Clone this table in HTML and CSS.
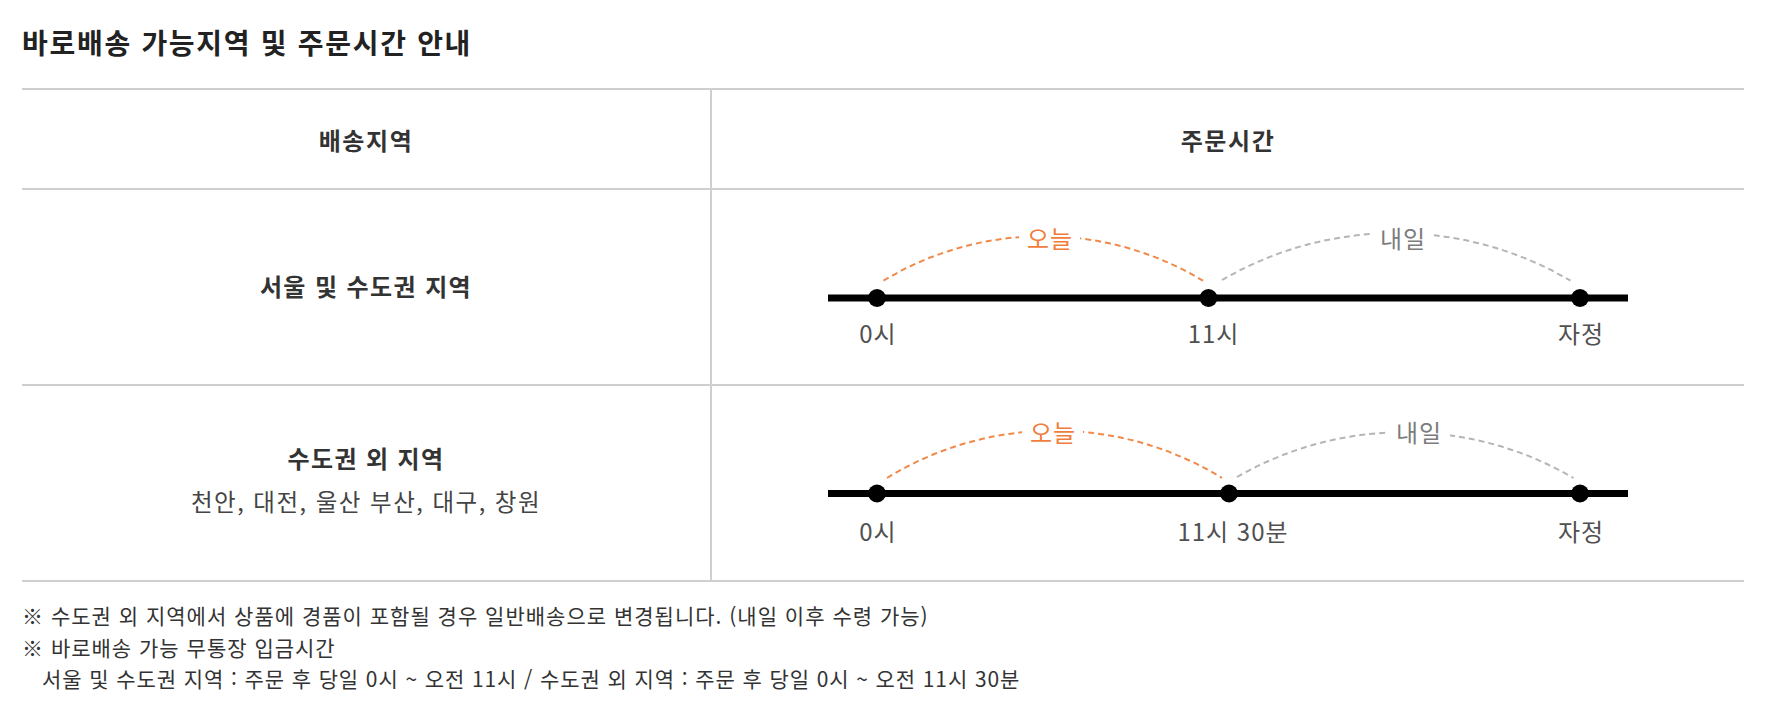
FILE: index.html
```html
<!DOCTYPE html>
<html lang="ko">
<head>
<meta charset="utf-8">
<title>바로배송 가능지역 및 주문시간 안내</title>
<link rel="stylesheet" href="styles.css">
</head>
<body>
<div class="wrap">
  <h2 class="title">바로배송 가능지역 및 주문시간 안내</h2>
  <div class="grid">
    <div class="cell head left">배송지역</div>
    <div class="cell head">주문시간</div>

    <div class="cell left row">
      <p class="area">서울 및 수도권 지역</p>
    </div>
    <div class="cell chart">
      <svg width="1032" height="194" viewBox="0 0 1032 194">
        <line x1="116" y1="108" x2="916" y2="108" stroke="#000" stroke-width="7"/>
        <path d="M171.5 90.7 A 309 309 0 0 1 491 90.7" fill="none" stroke="#f08a4b" stroke-width="2" stroke-dasharray="6 4"/>
        <path d="M510 90 A 345 345 0 0 1 858.5 90.7" fill="none" stroke="#b5b5b5" stroke-width="2" stroke-dasharray="6 4"/>
        <rect x="307" y="30" width="61" height="34" fill="#fff"/>
        <rect x="658" y="30" width="64" height="34" fill="#fff"/>
        <text x="338" y="51.5" class="lbl today">오늘</text>
        <text x="691" y="51.5" class="lbl tomorrow">내일</text>
        <circle cx="165" cy="108" r="9" fill="#000"/>
        <circle cx="496.5" cy="108" r="9" fill="#000"/>
        <circle cx="868" cy="108" r="9" fill="#000"/>
        <text x="166" y="146" class="lbl tick">0시</text>
        <text x="501.5" y="146" class="lbl tick">11시</text>
        <text x="869" y="146" class="lbl tick">자정</text>
      </svg>
    </div>

    <div class="cell left row row2">
      <p class="area">수도권 외 지역</p>
      <p class="cities">천안, 대전, 울산 부산, 대구, 창원</p>
    </div>
    <div class="cell chart">
      <svg width="1032" height="194" viewBox="0 0 1032 194">
        <line x1="116" y1="107.5" x2="916" y2="107.5" stroke="#000" stroke-width="7"/>
        <path d="M175 92 A 320 320 0 0 1 510 92" fill="none" stroke="#f08a4b" stroke-width="2" stroke-dasharray="6 4"/>
        <path d="M525 91 A 335 335 0 0 1 861.5 92" fill="none" stroke="#b5b5b5" stroke-width="2" stroke-dasharray="6 4"/>
        <rect x="310" y="30" width="61" height="34" fill="#fff"/>
        <rect x="674" y="30" width="64" height="34" fill="#fff"/>
        <text x="341" y="49.5" class="lbl today">오늘</text>
        <text x="707" y="49.5" class="lbl tomorrow">내일</text>
        <circle cx="165" cy="107.5" r="9" fill="#000"/>
        <circle cx="517" cy="107.5" r="9" fill="#000"/>
        <circle cx="868" cy="107.5" r="9" fill="#000"/>
        <text x="166" y="148.5" class="lbl tick">0시</text>
        <text x="521" y="148.5" class="lbl tick">11시 30분</text>
        <text x="869" y="148.5" class="lbl tick">자정</text>
      </svg>
    </div>
  </div>

  <div class="notes">
    <p>※ 수도권 외 지역에서 상품에 경품이 포함될 경우 일반배송으로 변경됩니다. (내일 이후 수령 가능)</p>
    <p>※ 바로배송 가능 무통장 입금시간</p>
    <p class="indent">서울 및 수도권 지역 : 주문 후 당일 0시 ~ 오전 11시 / 수도권 외 지역 : 주문 후 당일 0시 ~ 오전 11시 30분</p>
  </div>
</div>
</body>
</html>
```

FILE: styles.css
```css
* { box-sizing: border-box; }

body {
  margin: 0;
  background: #fff;
  font-family: "Noto Sans CJK KR", "Noto Sans", sans-serif;
  color: #333;
}

.wrap {
  padding: 24px 22px 0;
}

.title {
  margin: 0 0 28px;
  font-size: 28px;
  line-height: 36px;
  font-weight: 700;
  letter-spacing: 1.7px;
  color: #222;
}

.grid {
  display: grid;
  grid-template-columns: 690px 1fr;
  border-top: 2px solid #cfcfcf;
}

.cell {
  border-bottom: 2px solid #cfcfcf;
}

.left {
  border-right: 2px solid #cfcfcf;
}

.head {
  height: 100px;
  display: flex;
  align-items: center;
  justify-content: center;
  font-size: 24px;
  font-weight: 700;
  letter-spacing: 1.6px;
  color: #333;
}

.row {
  height: 196px;
  display: flex;
  flex-direction: column;
  align-items: center;
  justify-content: center;
}

.row2 {
  padding-bottom: 7px;
}

.area {
  margin: 0 0 2px;
  font-size: 24px;
  line-height: 30px;
  font-weight: 700;
  letter-spacing: 1.4px;
  color: #333;
}

.row2 .area {
  margin: 0;
}

.cities {
  margin: 13px 0 0;
  font-size: 23.5px;
  line-height: 30px;
  letter-spacing: 1.5px;
  color: #444;
}

.chart {
  height: 196px;
}

.chart svg {
  display: block;
}

.lbl {
  font-family: "Noto Sans CJK KR", sans-serif;
  text-anchor: middle;
  dominant-baseline: middle;
  font-size: 24px;
  letter-spacing: 1px;
}

.today { fill: #f07d3c; }
.tomorrow { fill: #7c7c7c; }
.tick { fill: #505050; }

.notes {
  margin-top: 18px;
}

.notes p {
  margin: 0;
  font-size: 21px;
  line-height: 31.5px;
  letter-spacing: 1px;
  color: #333;
}

.notes .indent {
  padding-left: 20px;
  letter-spacing: 0.9px;
}
```
